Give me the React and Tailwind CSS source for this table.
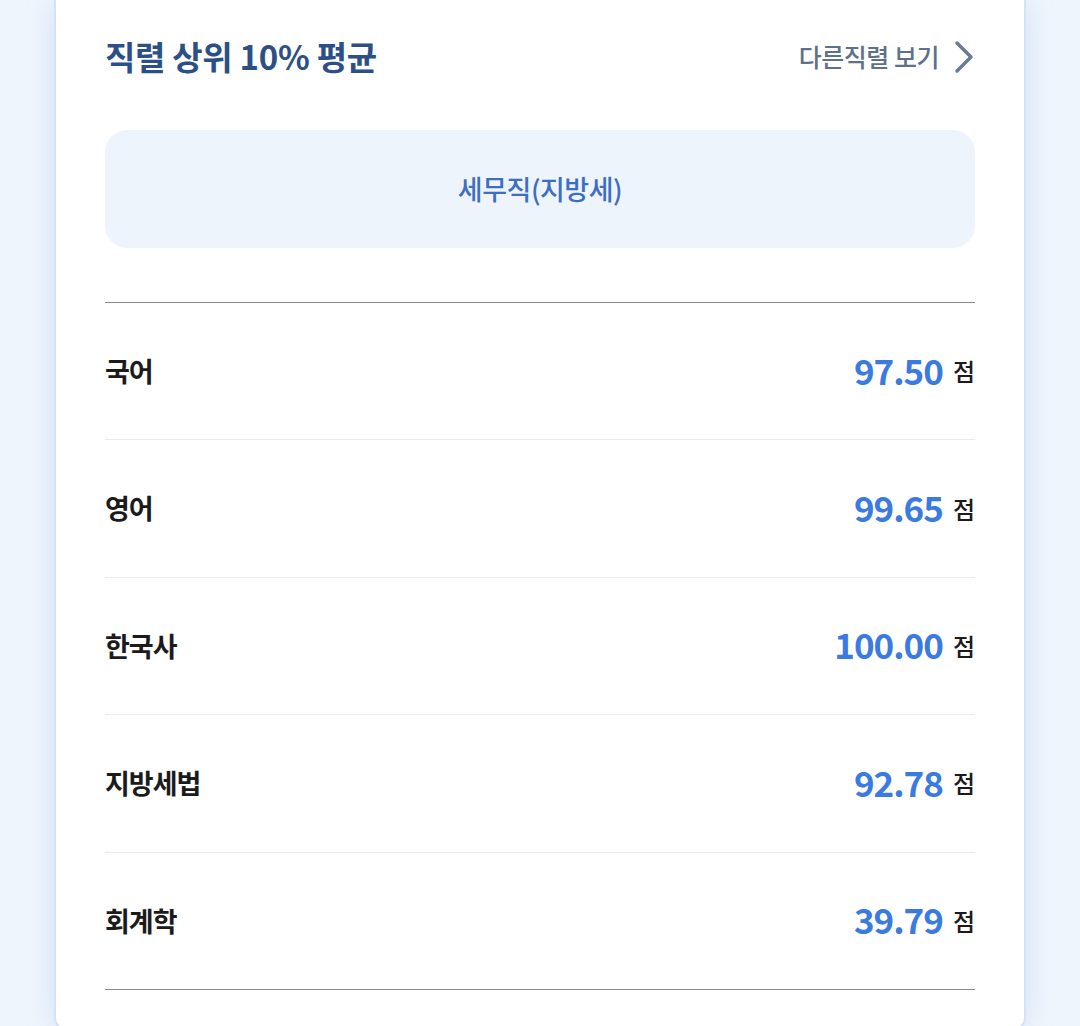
import React from 'react';

const scores = [
    { subject: '국어', value: '97.50' },
    { subject: '영어', value: '99.65' },
    { subject: '한국사', value: '100.00' },
    { subject: '지방세법', value: '92.78' },
    { subject: '회계학', value: '39.79' },
];

const font = { fontFamily: '"Noto Sans CJK KR", "Noto Sans", sans-serif' };

const ChevronRight = () => (
    <svg width="22" height="34" viewBox="0 0 22 34" fill="none" className="ml-[14px]">
        <path d="M4 3 L18 17 L4 31" stroke="#6b7c92" strokeWidth="3.5" strokeLinecap="round" strokeLinejoin="round" />
    </svg>
);

const App = () => {
    return (
        <div className="w-[1080px] h-[1026px] overflow-hidden bg-[#eff5fd]" style={font}>
            <div className="mx-[54px] h-[1030px] bg-white border-x-2 border-b-2 border-[#d4e2f5] rounded-b-[12px] px-[49px] shadow-[0_0_28px_rgba(140,175,225,0.28)]">
                {/* Header */}
                <div className="h-[113px] flex items-center justify-between">
                    <h1 className="text-[33px] font-bold text-[#2b4f86] tracking-[-0.3px] leading-none">
                        직렬 상위 10% 평균
                    </h1>
                    <button className="flex items-center text-[#5f7189] text-[25px] font-medium tracking-[-0.5px] leading-none">
                        다른직렬 보기
                        <ChevronRight />
                    </button>
                </div>

                {/* Selected job */}
                <div className="mt-[17px] h-[118px] rounded-[22px] bg-[#eef4fc] flex items-center justify-center">
                    <span className="text-[27px] font-medium text-[#3c6fc3] tracking-[-0.5px]">세무직(지방세)</span>
                </div>

                {/* Scores */}
                <div className="mt-[54px] border-t border-[#8a8a8a]">
                    {scores.map((s, i) => (
                        <div
                            key={s.subject}
                            className={`h-[137.4px] flex items-center justify-between border-b ${i === scores.length - 1 ? 'border-[#8a8a8a]' : 'border-[#ebebeb]'}`}
                        >
                            <span className="text-[27px] font-bold text-[#1b1b1b] tracking-[-1px]">{s.subject}</span>
                            <span className="flex items-center">
                                <span className="text-[35px] font-bold text-[#3b7ae0] tracking-[-1px] leading-none -mt-[4px]">{s.value}</span>
                                <span className="ml-[10px] text-[24px] font-medium text-[#1b1b1b] leading-none">점</span>
                            </span>
                        </div>
                    ))}
                </div>
            </div>
        </div>
    );
};

export default App;
